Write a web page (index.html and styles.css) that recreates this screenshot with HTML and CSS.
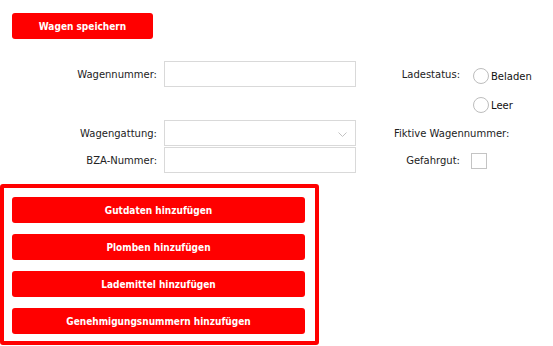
FILE: index.html
```html
<!DOCTYPE html>
<html lang="de">

<head>
    <meta charset="UTF-8">
    <title>Wagen</title>
    <link rel="stylesheet" href="styles.css">
</head>

<body>
    <div class="page">
        <button type="button" class="btn btn-save">Wagen speichern</button>

        <form class="wagon-form">
            <label class="field-label row-1" for="wagennummer">Wagennummer:</label>
            <input type="text" id="wagennummer" class="field-input row-1">

            <span class="field-label side-label row-1">Ladestatus:</span>
            <div class="radio-group">
                <label class="radio-option">
                    <input type="radio" name="ladestatus" value="beladen"> Beladen
                </label>
                <label class="radio-option">
                    <input type="radio" name="ladestatus" value="leer"> Leer
                </label>
            </div>

            <label class="field-label row-3" for="wagengattung">Wagengattung:</label>
            <div class="select-wrap row-3">
                <select id="wagengattung" class="field-input">
                    <option></option>
                </select>
                <svg class="chevron" width="9" height="5" viewBox="0 0 9 5">
                    <path d="M0.5 0.5 L4.5 4.5 L8.5 0.5" fill="none" stroke="#c2c2c2" stroke-width="1"/>
                </svg>
            </div>
            <span class="field-label side-label row-3">Fiktive Wagennummer:</span>

            <label class="field-label row-4" for="bza">BZA-Nummer:</label>
            <input type="text" id="bza" class="field-input row-4">
            <label class="field-label side-label row-4" for="gefahrgut">Gefahrgut:</label>
            <input type="checkbox" id="gefahrgut" class="checkbox row-4">
        </form>

        <div class="actions-box">
            <button type="button" class="btn">Gutdaten hinzufügen</button>
            <button type="button" class="btn">Plomben hinzufügen</button>
            <button type="button" class="btn">Lademittel hinzufügen</button>
            <button type="button" class="btn">Genehmigungsnummern hinzufügen</button>
        </div>
    </div>
</body>

</html>
```

FILE: styles.css
```css
body {
    margin: 0;
    font-family: "DejaVu Sans", Verdana, sans-serif;
    font-size: 10px;
    color: #222;
    background-color: #fff;
}

.page {
    display: flex;
    flex-direction: column;
    align-items: flex-start;
    padding-top: 13px;
}

.btn {
    height: 26px;
    border: none;
    border-radius: 3px;
    background-color: #ff0000;
    color: #fff;
    font-family: "DejaVu Sans Condensed", "DejaVu Sans", sans-serif;
    font-weight: bold;
    font-size: 10px;
    cursor: pointer;
}

.btn-save {
    width: 141px;
    margin-left: 12px;
}

.wagon-form {
    display: grid;
    grid-template-columns: 157px 192px 66px auto;
    grid-template-rows: 26px 31px 26px 26px;
    column-gap: 7px;
    row-gap: 1px;
    margin-top: 22px;
    align-items: center;
}

.field-label {
    grid-column: 1;
    text-align: right;
    white-space: nowrap;
    color: #222;
}

.side-label {
    grid-column: 3;
    margin-left: 31px;
    width: 66px;
}

.row-1 { grid-row: 1; }
.row-3 { grid-row: 3; }
.row-4 { grid-row: 4; }

.field-input {
    grid-column: 2;
    box-sizing: border-box;
    width: 192px;
    height: 26px;
    margin: 0;
    border: 1px solid #d9d9d9;
    border-radius: 0;
    background-color: #fff;
    font-family: inherit;
    font-size: 10px;
}

.select-wrap {
    grid-column: 2;
    position: relative;
    height: 26px;
}

.select-wrap select {
    appearance: none;
    -webkit-appearance: none;
}

.chevron {
    position: absolute;
    right: 9px;
    top: 12px;
}

.radio-group {
    grid-column: 4;
    grid-row: 1 / 3;
    align-self: start;
    display: flex;
    flex-direction: column;
    gap: 13px;
    padding-top: 7px;
    margin-left: 37px;
}

.radio-option {
    display: flex;
    align-items: center;
    color: #111;
}

.radio-option input {
    appearance: none;
    -webkit-appearance: none;
    width: 16px;
    height: 16px;
    margin: 0 2px 0 0;
    border: 1px solid #bdbdbd;
    border-radius: 50%;
    background-color: #fff;
}

.checkbox {
    grid-column: 4;
    appearance: none;
    -webkit-appearance: none;
    width: 16px;
    height: 16px;
    margin: 1px 0 0 35px;
    border: 1px solid #c4c4c4;
    background-color: #fff;
}

.actions-box {
    box-sizing: border-box;
    width: 319px;
    margin-top: 11px;
    padding: 9px 10px 7px 8px;
    border: 4px solid #ff0000;
    border-radius: 3px;
    display: flex;
    flex-direction: column;
    gap: 11px;
}

.actions-box .btn {
    width: 100%;
}
```
